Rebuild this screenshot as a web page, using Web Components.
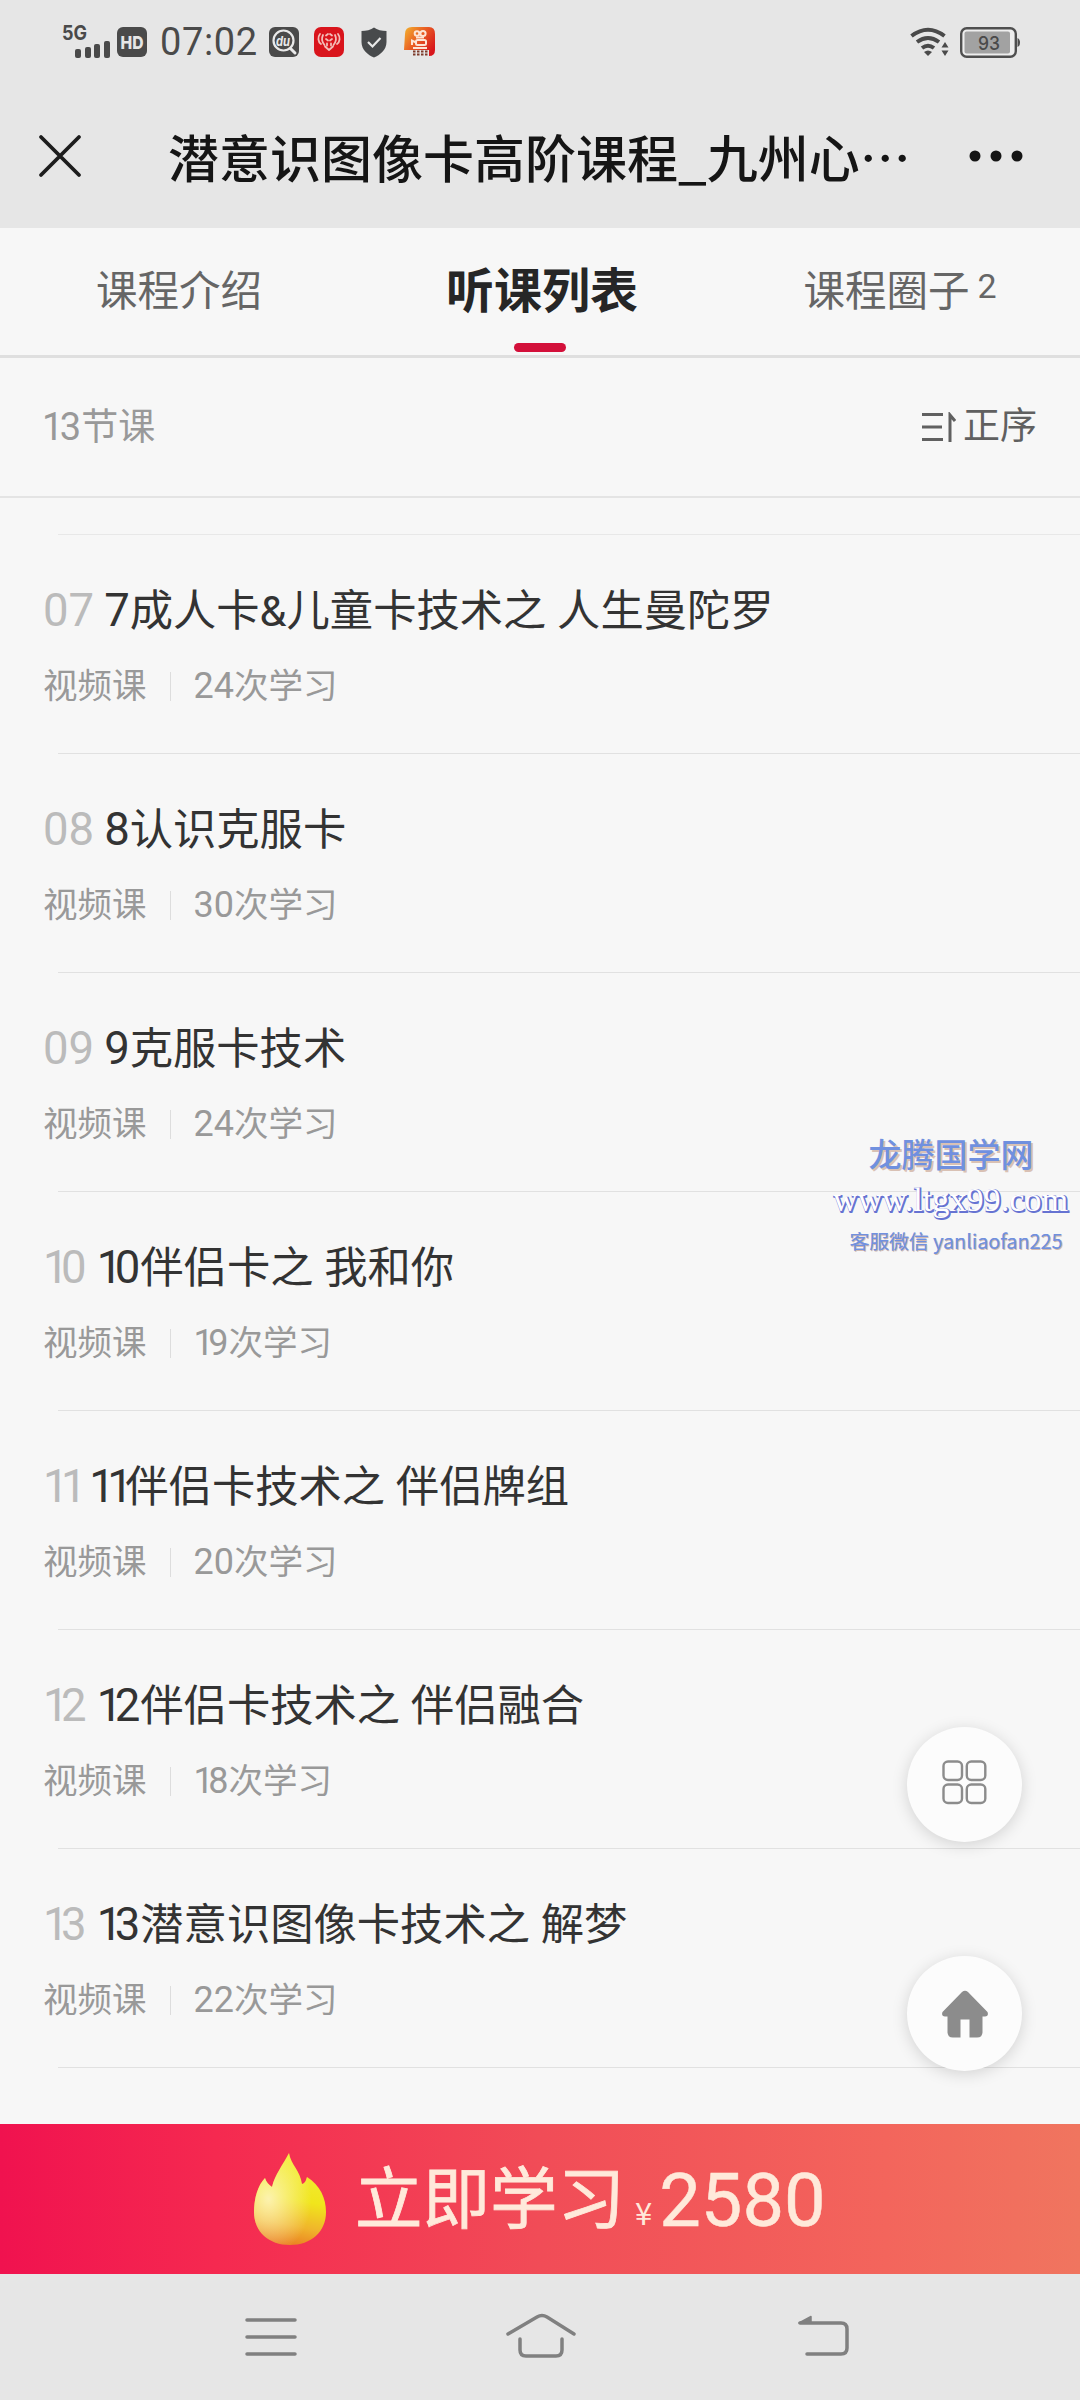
<!DOCTYPE html>
<html lang="zh-CN">
<head>
<meta charset="utf-8">
<meta name="viewport" content="width=1080">
<title>潜意识图像卡高阶课程</title>
<style>
  html, body {
    margin: 0;
    padding: 0;
  }
  body {
    width: 1080px;
    height: 2400px;
    overflow: hidden;
    background: #f7f7f7;
    font-family: Roboto, "Noto Sans CJK SC", sans-serif;
  }
</style>
</head>
<body>
<course-app></course-app>

<script>
const define = (name, html, setup) => {
  const template = document.createElement('template');
  template.innerHTML = html;

  window.customElements.define(name, class extends HTMLElement {
    constructor() {
      super();
      this.attachShadow({ mode: 'open' });
      this.shadowRoot.appendChild(document.importNode(template.content, true));
    }

    connectedCallback() {
      if (setup) {
        setup(this, this.shadowRoot);
      }
    }
  });
};

// figures are a bit larger than the Chinese text, and the digit 1 is set tighter
const figures = (text) =>
  text
    .replace('&', '&amp;')
    .replace(/\d+/g, (run) => `<b>${run.replace(/1/g, '<i>1</i>')}</b>`);

define('status-bar', `
  <style>
    :host {
      display: flex;
      align-items: center;
      height: 84px;
      box-sizing: border-box;
      padding: 0 60px 0 61px;
      color: #4a4a4a;
    }
    svg { display: block; flex: none; overflow: visible; }
    .signal { width: 50px; height: 34px; margin-right: 6px; }
    .time {
      width: 97px;
      margin: 0 12px 0 13px;
      font-size: 38px;
      line-height: 40px;
      letter-spacing: 0.6px;
    }
    .apps { display: flex; align-items: center; gap: 15px; }
    .right { display: flex; align-items: center; gap: 10px; margin-left: auto; }
  </style>
  <svg class="signal" viewBox="0 0 50 34" fill="#4a4a4a">
    <text x="1" y="15" font-family="Inter" font-size="20" font-weight="700" textLength="25" lengthAdjust="spacingAndGlyphs">5G</text>
    <rect x="14" y="24" width="6" height="9" rx="2"/>
    <rect x="24" y="22" width="6" height="11" rx="2"/>
    <rect x="33" y="19" width="6" height="14" rx="2"/>
    <rect x="43" y="16" width="6" height="17" rx="2"/>
  </svg>
  <svg width="30" height="30" viewBox="0 0 30 30">
    <rect width="30" height="30" rx="6" fill="#4a4a4a"/>
    <text x="3.5" y="22" font-family="Inter" font-size="18" font-weight="800" fill="#e6e6e6" textLength="23" lengthAdjust="spacingAndGlyphs">HD</text>
  </svg>
  <span class="time">07:02</span>
  <div class="apps">
    <svg width="30" height="30" viewBox="0 0 30 30">
      <rect width="30" height="30" rx="6" fill="#4a4a4a"/>
      <circle cx="14.5" cy="13.5" r="10" fill="none" stroke="#e9e9e9" stroke-width="2.2"/>
      <path d="M21.5 21.5L26 26" stroke="#e9e9e9" stroke-width="3" stroke-linecap="round"/>
      <text x="7" y="18.5" font-family="Inter" font-size="13" font-style="italic" font-weight="700" fill="#e9e9e9" textLength="14" lengthAdjust="spacingAndGlyphs">du</text>
    </svg>
    <svg width="30" height="30" viewBox="0 0 30 30">
      <rect width="30" height="30" rx="7" fill="#d9141c"/>
      <g fill="none" stroke="#f3bdb8" stroke-width="1.8" stroke-linecap="round" stroke-linejoin="round">
        <path d="M6 7C3.500 10 4 15 7 17M9 8C7.500 11 8 15 10.500 18M24 7C26.500 10 26 15 23 17M21 8C22.500 11 22 15 19.500 18"/>
        <path d="M12 8.500L14 7M18 8.500L16 7M12 12L14 13.500M18 12L16 13.500"/>
        <path d="M11 19.500L15 23L19 19.500M13 16.500V18.500M17 16.500V18.500"/>
      </g>
    </svg>
    <svg width="30" height="31" viewBox="0 0 30 31">
      <path d="M15 0.500C18 3 23 4 27.500 4V15C27.500 23 21 28 15 30.500C9 28 2.500 23 2.500 15V4C7 4 12 3 15 0.500Z" fill="#484a4c"/>
      <path d="M9 15L13.500 19.500L21.500 11" fill="none" stroke="#e8e8e8" stroke-width="2.200"/>
    </svg>
    <svg width="32" height="32" viewBox="0 0 32 32">
      <defs>
        <linearGradient id="k" x1="0" y1="0" x2="1" y2="0.700">
          <stop offset="0" stop-color="#f3b52f"/>
          <stop offset="0.450" stop-color="#ea6424"/>
          <stop offset="1" stop-color="#d8161c"/>
        </linearGradient>
      </defs>
      <path d="M1 8Q1 1 8 1H25Q31 1 31 8V24Q31 30 25 30V24H0Z" fill="url(#k)"/>
      <g fill="none" stroke="#fde5d5" stroke-width="2">
        <circle cx="13" cy="7.500" r="2.300"/>
        <circle cx="19" cy="7.500" r="2.600"/>
        <rect x="12" y="14" width="10" height="5" rx="1.500"/>
        <path d="M12 16.500L8 14.500V19M12 11.500H20M9 22H23"/>
      </g>
      <path d="M9 25.500H24M9 28.500H24" stroke="#7d3a2a" stroke-width="1.800" stroke-dasharray="2.500 1.500"/>
    </svg>
  </div>
  <div class="right">
    <svg width="40" height="30" viewBox="0 0 40 30">
      <g fill="none" stroke="#4a4a4a" stroke-width="4">
        <path d="M1.500 9Q18 -3.500 34.500 9"/>
        <path d="M7 15Q18 7 29 15"/>
        <path d="M12 21Q18 16.500 24 21"/>
      </g>
      <path d="M14 25Q18 22 22 25L18 29Z" fill="#4a4a4a"/>
      <path d="M35 15L38.500 20.500H31.500ZM31.500 23.500H38.500L35 29Z" fill="#4a4a4a"/>
    </svg>
    <svg width="60" height="31" viewBox="0 0 60 31">
      <rect x="1.200" y="1.200" width="54.600" height="28.600" rx="5.500" fill="#eee" stroke="#4f4f4f" stroke-width="2.400"/>
      <rect x="4.500" y="4.500" width="45.500" height="22" rx="2" fill="#a2a2a2"/>
      <path d="M57.500 11Q60 12 60 15.500T57.500 20Z" fill="#4f4f4f"/>
      <text x="18" y="22.500" font-family="Inter" font-size="18" font-weight="500" fill="#4a4a4a" textLength="22" lengthAdjust="spacingAndGlyphs">93</text>
    </svg>
  </div>
`);

define('title-bar', `
  <style>
    :host {
      display: flex;
      align-items: center;
      height: 144px;
      box-sizing: border-box;
      padding: 0 56px 0 38px;
    }
    .title {
      flex: 1;
      margin-left: 86px;
      font: 500 51px/60px "Noto Sans CJK SC", sans-serif;
      color: #151515;
      white-space: nowrap;
    }
    svg { display: block; }
  </style>
  <svg width="44" height="44" viewBox="0 0 44 44">
    <path d="M3 3L41 41M41 3L3 41" stroke="#1d1d1d" stroke-width="3.800" stroke-linecap="round"/>
  </svg>
  <div class="title"><slot></slot></div>
  <svg width="56" height="12" viewBox="0 0 56 12" fill="#151515">
    <circle cx="7" cy="6" r="5.500"/><circle cx="28" cy="6" r="5.500"/><circle cx="49" cy="6" r="5.500"/>
  </svg>
`);

define('tab-bar', `
  <style>
    :host {
      display: grid;
      grid-template-columns: repeat(3, 1fr);
      height: 130px;
      box-sizing: border-box;
      border-bottom: 3px solid #dfdfdf;
    }
  </style>
  <slot></slot>
`);

define('tab-item', `
  <style>
    :host {
      display: grid;
      grid-template-rows: 1fr 9px 3px;
      justify-items: center;
      color: #666;
      font-size: 41.500px;
    }
    .label {
      display: flex;
      align-items: center;
      white-space: nowrap;
      line-height: 60px;
      margin: 12px 2px 0 0;
    }
    .bar { width: 52px; height: 9px; border-radius: 5px; }
    :host([active]) { color: #262626; font-size: 48px; font-weight: 700; }
    :host([active]) .label { margin-right: -4px; }
    :host([active]) .bar { background: #d3103a; }
    .count { font-size: 34px; line-height: 40px; margin: 0 -2px 12px 8px; }
    .count:empty { display: none; }
  </style>
  <div class="label"><slot></slot><span class="count"></span></div>
  <div class="bar"></div>
`, (el, root) => {
  root.querySelector('.count').textContent = el.getAttribute('count') || '';
});

define('list-head', `
  <style>
    :host {
      display: flex;
      align-items: center;
      justify-content: space-between;
      height: 140px;
      box-sizing: border-box;
      padding: 0 43px 0 42px;
      border-bottom: 2px solid #e4e4e4;
      font-size: 37px;
      line-height: 50px;
      color: #999;
    }
    b { font-weight: 400; font-size: 38px; }
    i { font-style: normal; letter-spacing: -3.500px; }
    .sort { display: flex; align-items: center; gap: 7px; color: #606060; }
    svg { display: block; }
  </style>
  <span class="total"></span>
  <span class="sort">
    <svg width="34" height="30" viewBox="0 0 34 30" fill="none" stroke="#606060" stroke-width="3">
      <path d="M0 2.500H21M0 15H20M0 27.500H21M28 30V3L33 9"/>
    </svg>
    <span><slot></slot></span>
  </span>
`, (el, root) => {
  root.querySelector('.total').innerHTML = figures(el.getAttribute('total'));
});

define('lesson-item', `
  <style>
    :host {
      display: flex;
      flex-direction: column;
      height: 219px;
      box-sizing: border-box;
      padding: 46px 0 0 43px;
    }
    :host::after {
      content: "";
      margin: auto 0 0 15px;
      height: 1px;
      background: #e1e1e1;
    }
    b { font-weight: 400; }
    i { font-style: normal; letter-spacing: -7.500px; }
    .row { display: flex; align-items: center; white-space: nowrap; }
    .title { font-size: 43.300px; line-height: 60px; color: #333; gap: 10px; }
    .title b { font-size: 45.500px; }
    .no { color: #bbb; }
    .meta { font-size: 34.500px; line-height: 50px; margin-top: 19px; color: #999; }
    .meta b { font-size: 36px; }
    .meta i { letter-spacing: -5.500px; }
    .split { width: 1px; height: 29px; margin: 0 23px; background: #ddd; }
  </style>
  <div class="row title"><span class="no"></span><span class="name"></span></div>
  <div class="row meta"><span>视频课</span><div class="split"></div><span class="views"></span></div>
`, (el, root) => {
  root.querySelector('.no').innerHTML = figures(el.getAttribute('no'));
  root.querySelector('.name').innerHTML = figures(el.getAttribute('name'));
  root.querySelector('.views').innerHTML = figures(el.getAttribute('views') + '次学习');
});

define('round-button', `
  <style>
    :host {
      display: flex;
      align-items: center;
      justify-content: center;
      width: 115px;
      height: 115px;
      border-radius: 50%;
      background: #fcfcfc;
      box-shadow: 0 3px 16px rgba(0, 0, 0, 0.15);
    }
  </style>
  <slot></slot>
`);

define('site-mark', `
  <style>
    :host {
      display: flex;
      flex-direction: column;
      align-items: center;
      font-family: "Noto Sans CJK SC", sans-serif;
      white-space: nowrap;
      color: #7090df;
    }
    .name { font-size: 33px; line-height: 44px; font-weight: 500; text-shadow: 2px 2px 0 #d9c1b4; }
    svg { display: block; margin-top: 4px; overflow: visible; }
    .contact { font-size: 19.800px; line-height: 30px; text-shadow: 1px 1px 0 #d0b8b0, 0.5px 0 0 #7090df; margin: 1px 0 0 10px; }
  </style>
  <div class="name">龙腾国学网</div>
  <svg width="240" height="46" viewBox="0 0 240 46" font-family="Liberation Serif" font-size="34">
    <text x="3" y="32.500" fill="#6673d2" stroke="#6673d2" stroke-width="1.800" textLength="235" lengthAdjust="spacingAndGlyphs" aria-hidden="true">www.ltgx99.com</text>
    <text x="2" y="31.500" fill="#fff" textLength="235" lengthAdjust="spacingAndGlyphs">www.ltgx99.com</text>
  </svg>
  <div class="contact">客服微信 yanliaofan225</div>
`);

define('buy-bar', `
  <style>
    :host {
      display: flex;
      align-items: center;
      height: 150px;
      box-sizing: border-box;
      padding-left: 253px;
      background: linear-gradient(90deg, #f0124f 0%, #f52950 20%, #f14c57 50%, #f3655c 82%, #f0755f 100%);
      color: #ffe9da;
      white-space: nowrap;
    }
    .label { margin: 1px 0 0 28px; font-size: 67.500px; line-height: 90px; -webkit-text-stroke: 0.800px #ffe9da; }
    .yen { align-self: flex-end; margin: 0 7px 44px 10px; font-size: 31px; line-height: 36px; font-family: "Noto Sans CJK SC", sans-serif; }
    .price { font-size: 74px; line-height: 90px; margin-top: 4px; -webkit-text-stroke: 0.500px #ffe9da; }
    svg { display: block; }
  </style>
  <svg width="74" height="94" viewBox="0 0 74 94">
    <defs>
      <linearGradient id="f" x1="0.600" y1="0" x2="0.450" y2="1">
        <stop offset="0" stop-color="#f3ee3c"/>
        <stop offset="0.500" stop-color="#f0e51c"/>
        <stop offset="0.780" stop-color="#f0b52b"/>
        <stop offset="1" stop-color="#ea7f22"/>
      </linearGradient>
      <radialGradient id="w" cx="0.200" cy="0.500" r="0.600">
        <stop offset="0" stop-color="#fff6c8" stop-opacity="0.850"/>
        <stop offset="1" stop-color="#fff6c8" stop-opacity="0"/>
      </radialGradient>
    </defs>
    <path d="M36 1C38 13 47 18 49 32C53 31 53 27 54 25C67 33 73 46 73 60C73 80 58 93 37 93C16 93 1 80 1 60C1 46 5 33 12 26C13 30 16 33 19 35C22 22 30 13 36 1Z" fill="url(#f)"/>
    <path d="M36 1C38 13 47 18 49 32C53 31 53 27 54 25C67 33 73 46 73 60C73 80 58 93 37 93C16 93 1 80 1 60C1 46 5 33 12 26C13 30 16 33 19 35C22 22 30 13 36 1Z" fill="url(#w)"/>
  </svg>
  <span class="label"><slot></slot></span>
  <span class="yen">¥</span>
  <span class="price"></span>
`, (el, root) => {
  root.querySelector('.price').textContent = el.getAttribute('price');
});

define('system-nav', `
  <style>
    :host {
      display: grid;
      grid-template-columns: 261px 290px 54px;
      height: 126px;
      box-sizing: border-box;
      padding: 38px 0 0 245px;
      background: #e6e6e6;
    }
    svg { display: block; fill: none; stroke: #808080; stroke-width: 3.500; stroke-linecap: round; stroke-linejoin: round; }
  </style>
  <svg width="52" height="48" viewBox="0 0 52 48">
    <path d="M2 8H50M2 25H50M2 42H50"/>
  </svg>
  <svg width="72" height="48" viewBox="0 0 72 48">
    <path d="M2 22L31 5Q36 2 41 5L68 22M14 27V38Q14 44 20 44H50Q56 44 56 38V27"/>
  </svg>
  <svg width="54" height="48" viewBox="0 0 54 48">
    <path d="M11 42H45Q51 42 51 36V17Q51 11 45 11H4"/>
    <path d="M3 11L15 4.500V11Z" fill="#808080" stroke-width="1.500"/>
  </svg>
`);

define('course-app', `
  <style>
    :host {
      display: flex;
      flex-direction: column;
      position: relative;
      width: 1080px;
      height: 2400px;
      background: #f7f7f7;
    }
    header { height: 228px; background: #e6e6e6; }
    .list { flex: 1; overflow: hidden; }
    .list::before {
      content: "";
      display: block;
      margin: 36px 0 0 58px;
      height: 1px;
      background: #e8e8e8;
    }
    site-mark { position: absolute; top: 1131px; left: 831px; width: 240px; }
    .grid { position: absolute; top: 1727px; left: 907px; }
    .home { position: absolute; top: 1956px; left: 907px; }
    .grid svg { margin-bottom: 4px; }
  </style>
  <header>
    <status-bar></status-bar>
    <title-bar>潜意识图像卡高阶课程_九州心…</title-bar>
  </header>
  <tab-bar>
    <tab-item>课程介绍</tab-item>
    <tab-item active>听课列表</tab-item>
    <tab-item count="2">课程圈子</tab-item>
  </tab-bar>
  <list-head total="13节课">正序</list-head>
  <div class="list"></div>
  <buy-bar price="2580">立即学习</buy-bar>
  <system-nav></system-nav>
  <site-mark></site-mark>
  <round-button class="grid">
    <svg width="45" height="45" viewBox="0 0 45 45" fill="none" stroke="#8c8c8c" stroke-width="2.400">
      <rect x="1.500" y="1.500" width="18.500" height="18.500" rx="4.500"/>
      <rect x="24.800" y="1.500" width="18.500" height="18.500" rx="4.500"/>
      <rect x="1.500" y="24.500" width="18.500" height="18.500" rx="4.500"/>
      <rect x="24.800" y="24.500" width="18.500" height="18.500" rx="4.500"/>
    </svg>
  </round-button>
  <round-button class="home">
    <svg width="48" height="48" viewBox="0 0 48 48" fill="#8c8c8c">
      <path d="M21 2Q24 -0.500 27 2L46.500 22Q48 26 44 26.500H41.500V42Q41.500 47.500 36 47.500H28.500V29.500H19.500V47.500H12Q6.500 47.500 6.500 42V26.500H4Q0 26 1.500 22Z"/>
    </svg>
  </round-button>
`, (el, root) => {
  const lessons = [
    ['07', '7成人卡&儿童卡技术之 人生曼陀罗', 24],
    ['08', '8认识克服卡', 30],
    ['09', '9克服卡技术', 24],
    ['10', '10伴侣卡之 我和你', 19],
    ['11', '11伴侣卡技术之 伴侣牌组', 20],
    ['12', '12伴侣卡技术之 伴侣融合', 18],
    ['13', '13潜意识图像卡技术之 解梦', 22],
  ];
  const list = root.querySelector('.list');
  lessons.forEach(([no, name, views]) => {
    const item = document.createElement('lesson-item');
    item.setAttribute('no', no);
    item.setAttribute('name', name);
    item.setAttribute('views', views);
    list.appendChild(item);
  });
});
</script>
</body>
</html>
